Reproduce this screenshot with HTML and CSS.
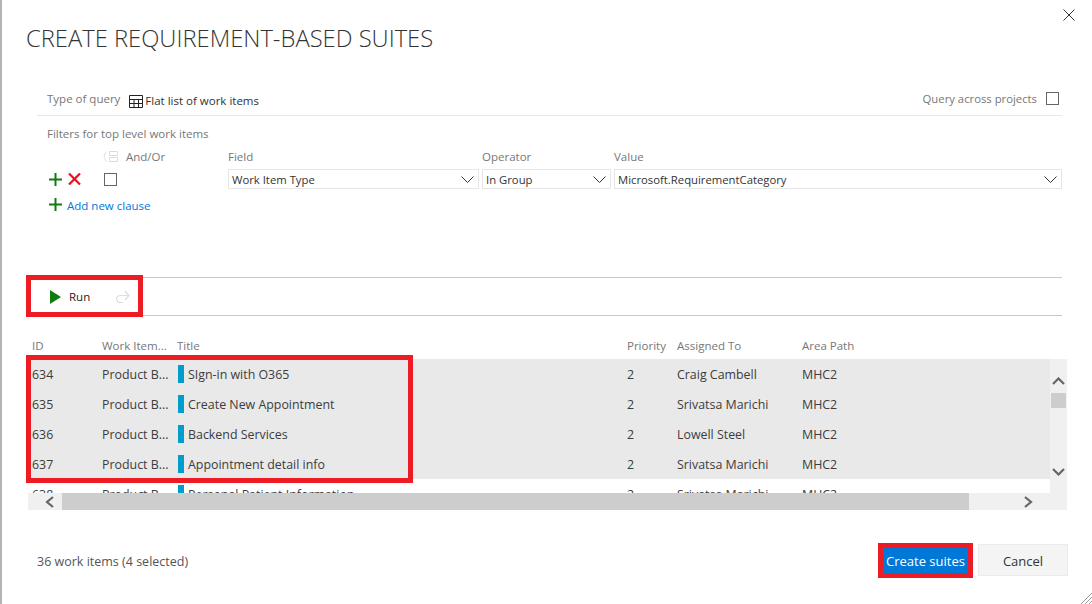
FILE: index.html
```html
<!DOCTYPE html>
<html lang="en">
<head>
    <meta charset="UTF-8">
    <title>Create requirement-based suites</title>
    <link rel="stylesheet" href="styles.css">
</head>
<body>

<div class="dialog">
    <svg class="close" width="12" height="12" viewBox="0 0 12 12"><path d="M.5.5l11 11M11.500.5l-11 11" stroke="#333" fill="none"/></svg>
    <h1>CREATE REQUIREMENT-BASED SUITES</h1>

    <div class="query-type">
        <span class="muted">Type of query</span>
        <svg class="grid-icon" width="14" height="13" viewBox="0 0 14 13"><path d="M.5.5h13v12H.5zM.5 4.500h13M.5 8.500h13M5 4.500v8M9.500 4.500v8" stroke="#222" fill="none"/></svg>
        <span class="flat">Flat list of work items</span>
        <span class="across muted">Query across projects</span>
        <span class="checkbox"></span>
    </div>

    <div class="filters">
        <div class="muted filters-title">Filters for top level work items</div>
        <div class="clause-head muted">
            <svg class="group-icon" width="15" height="11" viewBox="0 0 15 11"><path d="M3 .5L1 5.500l2 5M6.500.5h8v4h-8zM6.500 6.500h8v4h-8z" stroke="#ddd" fill="none"/></svg>
            <span class="andor">And/Or</span>
            <span class="field">Field</span>
            <span class="operator">Operator</span>
            <span>Value</span>
        </div>
        <div class="clause">
            <svg class="plus" width="13" height="13" viewBox="0 0 13 13"><path d="M6.500 0v13M0 6.500h13" stroke="#107c10" stroke-width="2" fill="none"/></svg>
            <svg class="cross" width="13" height="12" viewBox="0 0 13 12"><path d="M1 .5l11 11M12 .5l-11 11" stroke="#e81123" stroke-width="2.200" fill="none"/></svg>
            <span class="checkbox clause-check"></span>
            <div class="select select-field">Work Item Type<svg width="13" height="7" viewBox="0 0 13 7"><path d="M.5.5l6 6 6-6" stroke="#333" fill="none"/></svg></div>
            <div class="select select-op">In Group<svg width="13" height="7" viewBox="0 0 13 7"><path d="M.5.5l6 6 6-6" stroke="#333" fill="none"/></svg></div>
            <div class="select select-value">Microsoft.RequirementCategory<svg width="13" height="7" viewBox="0 0 13 7"><path d="M.5.5l6 6 6-6" stroke="#333" fill="none"/></svg></div>
        </div>
        <div class="add-clause">
            <svg class="plus" width="13" height="13" viewBox="0 0 13 13"><path d="M6.500 0v13M0 6.500h13" stroke="#107c10" stroke-width="2" fill="none"/></svg>
            <a>Add new clause</a>
        </div>
    </div>

    <div class="toolbar">
        <svg class="run-icon" width="11" height="14" viewBox="0 0 11 14"><path d="M0 0l11 7-11 7z" fill="#107c10"/></svg>
        <span class="run">Run</span>
        <svg class="redo" width="15" height="13" viewBox="0 0 15 13"><path d="M14 5.500H5.500a4 3.500 0 0 0 0 7H8M10 1l4 4.500-4 4.500" stroke="#ddd" stroke-width="1.200" fill="none"/></svg>
    </div>

    <div class="results-head muted">
        <span>ID</span><span>Work Item...</span><span>Title</span><span>Priority</span><span>Assigned To</span><span>Area Path</span>
    </div>
    <div class="results">
        <div class="rows">
            <div class="row selected"><span>634</span><span>Product B...</span><span class="title"><i></i>SIgn-in with O365</span><span>2</span><span>Craig Cambell</span><span>MHC2</span></div>
            <div class="row selected"><span>635</span><span>Product B...</span><span class="title"><i></i>Create New Appointment</span><span>2</span><span>Srivatsa Marichi</span><span>MHC2</span></div>
            <div class="row selected"><span>636</span><span>Product B...</span><span class="title"><i></i>Backend Services</span><span>2</span><span>Lowell Steel</span><span>MHC2</span></div>
            <div class="row selected"><span>637</span><span>Product B...</span><span class="title"><i></i>Appointment detail info</span><span>2</span><span>Srivatsa Marichi</span><span>MHC2</span></div>
            <div class="row"><span>638</span><span>Product B...</span><span class="title"><i></i>Personal Patient Information</span><span>2</span><span>Srivatsa Marichi</span><span>MHC2</span></div>
        </div>
        <div class="vscroll">
            <svg width="13" height="8" viewBox="0 0 13 8"><path d="M1 7l5.500-5.500L12 7" stroke="#666" stroke-width="2.200" fill="none"/></svg>
            <div class="vthumb"></div>
            <svg class="vdown" width="13" height="8" viewBox="0 0 13 8"><path d="M1 1l5.500 5.500L12 1" stroke="#666" stroke-width="2.200" fill="none"/></svg>
        </div>
        <div class="hscroll">
            <svg class="hleft" width="9" height="12" viewBox="0 0 9 12"><path d="M8 1L2 6l6 5" stroke="#666" stroke-width="2.200" fill="none"/></svg>
            <div class="hthumb"></div>
            <svg class="hright" width="9" height="12" viewBox="0 0 9 12"><path d="M1 1l6 5-6 5" stroke="#666" stroke-width="2.200" fill="none"/></svg>
        </div>
    </div>

    <div class="footer">
        <span class="count">36 work items (4 selected)</span>
        <button class="primary">Create suites</button>
        <button class="cancel">Cancel</button>
    </div>

    <div class="mark mark-run"></div>
    <div class="mark mark-rows"></div>
    <svg class="grip" width="11" height="11" viewBox="0 0 11 11"><path d="M0 11L11 0M4 11l7-7M8 11l3-3" stroke="#999" fill="none"/></svg>
</div>

</body>
</html>
```

FILE: styles.css
```css
* {
    box-sizing: border-box;
}
body {
    margin: 0;
    font-family: "Open Sans", "Noto Sans", sans-serif;
    font-size: 11.5px;
    color: #333;
    background-color: #fff;
}
.dialog {
    position: relative;
    width: 1092px;
    height: 604px;
    overflow: hidden;
    border-left: 2px solid #b4b4b4;
}
.muted {
    color: #777;
}
.close {
    position: absolute;
    top: 9px;
    left: 1061px;
}
h1 {
    margin: 0;
    padding: 21px 0 0 24px;
    height: 90px;
    font-size: 23.75px;
    line-height: 34px;
    font-weight: 300;
    color: #333;
    white-space: nowrap;
}
.query-type {
    display: flex;
    align-items: center;
    margin: 0 30px 0 35px;
    height: 26px;
    padding: 0 3px 8px 10px;
    border-bottom: 1px solid #e8e8e8;
}
.grid-icon {
    margin: 5px 2px 0 9px;
}
.flat {
    margin-top: 4px;
    color: #333;
}
.across {
    margin-left: auto;
    margin-right: 9px;
    font-size: 11.3px;
}
.checkbox {
    display: inline-block;
    width: 13px;
    height: 13px;
    border: 1px solid #666;
}
.filters {
    padding-left: 45px;
    height: 151px;
}
.filters-title {
    margin-top: 10px;
    line-height: 16px;
}
.clause-head {
    display: flex;
    align-items: center;
    margin-top: 6px;
    height: 16px;
}
.group-icon {
    margin-left: 56px;
}
.andor {
    margin-left: 8px;
    width: 102px;
}
.field {
    width: 254px;
}
.operator {
    width: 132px;
}
.clause {
    display: flex;
    align-items: center;
    margin-top: 5px;
    height: 20px;
}
.plus {
    margin-left: 2px;
}
.cross {
    margin-left: 6px;
}
.clause-check {
    margin-left: 23px;
}
.select {
    display: flex;
    align-items: center;
    justify-content: space-between;
    height: 20px;
    margin-right: 3px;
    padding: 0 4px 0 3px;
    border: 1px solid #e6e6e6;
    color: #333;
    font-size: 11.3px;
}
.select-field {
    margin-left: 111px;
    width: 251px;
}
.select-op {
    width: 129px;
}
.select-value {
    width: 448px;
    margin-right: 0;
}
.add-clause {
    display: flex;
    align-items: center;
    margin-top: 5px;
    height: 20px;
}
.add-clause a {
    margin-left: 5px;
    margin-top: 2px;
    color: #0078d7;
}
.toolbar {
    display: flex;
    align-items: center;
    margin-left: 26px;
    margin-right: 30px;
    height: 39px;
    border-top: 1px solid #c8c8c8;
    border-bottom: 1px solid #c8c8c8;
    color: #222;
}
.run-icon {
    margin-left: 22px;
}
.run {
    margin-left: 8px;
}
.redo {
    margin-left: 25px;
}
.results-head,
.row {
    display: grid;
    grid-template-columns: 70px 75px 450px 50px 125px 1fr;
    padding-left: 4px;
    align-items: center;
}
.results-head {
    margin: 21px 0 0 26px;
    height: 16px;
    width: 1022px;
}
.results {
    display: grid;
    grid-template-columns: 1022px 17px;
    grid-template-rows: 134px 17px;
    margin: 6px 0 0 26px;
}
.rows {
    overflow: hidden;
    font-size: 12.4px;
    color: #3c3c3c;
}
.row {
    height: 30px;
}
.selected {
    background-color: #e9e9e9;
}
.title {
    display: flex;
    align-items: center;
}
.title i {
    width: 6px;
    height: 18px;
    margin: 0 4px 0 1px;
    background-color: #009ccc;
}
.vscroll {
    display: flex;
    flex-direction: column;
    align-items: center;
    padding-top: 18px;
    background-color: #f0f0f0;
}
.vthumb {
    width: 15px;
    height: 15px;
    margin-top: 8px;
    background-color: #cdcdcd;
}
.vdown {
    margin-top: 60px;
}
.hscroll {
    grid-column: 1 / 3;
    display: flex;
    align-items: center;
    background-color: #f0f0f0;
}
.hleft {
    margin-left: 17px;
}
.hthumb {
    align-self: stretch;
    width: 907px;
    margin-left: 8px;
    background-color: #cdcdcd;
}
.hright {
    margin-left: 55px;
}
.footer {
    display: flex;
    align-items: center;
    margin: 34px 24px 0 35px;
    height: 32px;
}
.count {
    margin-right: auto;
    margin-top: 2px;
    color: #555;
    font-size: 12.5px;
}
button {
    font-family: inherit;
    font-size: 13px;
    height: 32px;
    padding: 2px 0 0;
}
.primary {
    width: 95px;
    height: 35px;
    border: 5px solid #ed1c24;
    background-color: #0078d7;
    color: #fff;
}
.cancel {
    width: 90px;
    margin-left: 5px;
    border: 1px solid #ececec;
    background-color: #f4f4f4;
    color: #333;
}
.mark {
    position: absolute;
    border: 5px solid #ed1c24;
}
.mark-run {
    left: 24px;
    top: 275px;
    width: 117px;
    height: 42px;
}
.mark-rows {
    left: 24px;
    top: 355px;
    width: 387px;
    height: 128px;
}
.grip {
    position: absolute;
    left: 1079px;
    top: 593px;
}
```
